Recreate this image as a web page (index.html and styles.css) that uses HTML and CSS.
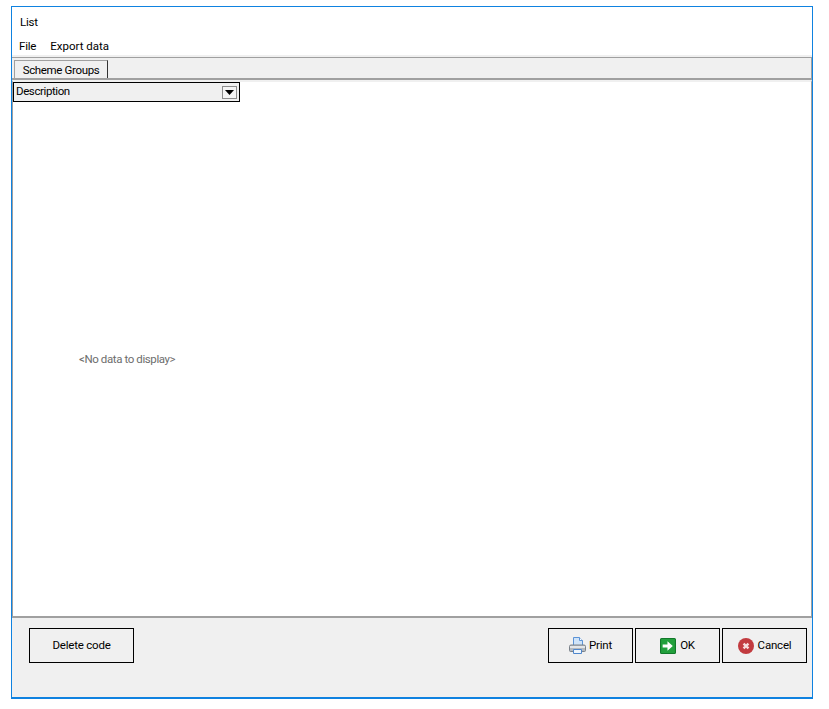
FILE: index.html
```html
<!DOCTYPE html>
<html lang="en">
<head>
<meta charset="utf-8">
<title>List</title>
<link rel="stylesheet" href="styles.css">
</head>
<body>
<div class="window">
  <div class="title">List</div>
  <nav class="menu"><span>File</span><span class="menu-export">Export data</span></nav>
  <div class="tabstrip"><div class="tab">Scheme Groups</div></div>
  <main class="pane">
    <div class="filter">
      <span class="tight">Description</span>
      <span class="drop"><svg width="9" height="5" viewBox="0 0 9 5"><path d="M0 0h9L4.500 5z" fill="#000"/></svg></span>
    </div>
    <div class="empty">&lt;No data to display&gt;</div>
  </main>
  <footer class="footer">
    <button class="btn wide"><span class="label">Delete code</span></button>
    <div class="actions">
      <button class="btn">
        <svg class="ico-print" width="17" height="17" viewBox="0 0 17 17">
          <path d="M4.500 .5h6l3 3v6h-9z" fill="#cfe3f8" stroke="#5b93d6"/>
          <path d="M10.500 .5v3h3" fill="#fff" stroke="#5b93d6"/>
          <path d="M2 8h13a1.500 1.500 0 0 1 1.500 1.500v4a1 1 0 0 1-1 1h-14a1 1 0 0 1-1-1v-4A1.500 1.500 0 0 1 2 8z" fill="#b4b9bf" stroke="#7b828a"/>
          <rect x="1" y="9" width="15" height="2" fill="#e3e6e9"/>
          <path d="M4.500 12.500h8v4h-8z" fill="#eef5fc" stroke="#4f87cc"/>
        </svg>
        <span class="label">Print</span>
      </button>
      <button class="btn">
        <svg width="16" height="16" viewBox="0 0 15 15">
          <rect x=".5" y=".5" width="14" height="14" rx="1" fill="#22a03c" stroke="#12782a"/>
          <path d="M2.500 6h4.500V3l5 4.500-5 4.500V9H2.500z" fill="#fff"/>
        </svg>
        <span class="label">OK</span>
      </button>
      <button class="btn">
        <svg width="16" height="16" viewBox="0 0 15 15">
          <circle cx="7.500" cy="7.500" r="7.500" fill="#c23b3f"/>
          <path d="M5.200 5.200l4.600 4.600M9.800 5.200l-4.600 4.600" stroke="#f6dcdc" stroke-width="2.200" fill="none"/>
        </svg>
        <span class="label">Cancel</span>
      </button>
    </div>
  </footer>
</div>
</body>
</html>
```
FILE: styles.css
```css
* { box-sizing: border-box; }
html, body { height: 100%; }
body {
  margin: 0;
  padding: 6px 0 0 11px;
  background: #fff;
  font: 11.500px Roboto, "Liberation Sans", Arial, sans-serif;
  letter-spacing: -0.2px;
  color: #000;
}
.window {
  width: 802px;
  height: 693px;
  border: 1px solid #0f82e0;
  border-bottom-width: 2px;
  background: #fff;
  display: flex;
  flex-direction: column;
}
.title { height: 28px; padding: 8px 0 0 8px; line-height: 15px; }
.menu { height: 20px; display: flex; gap: 14px; padding: 4px 0 0 7px; line-height: 15px; }
.menu-export { letter-spacing: 0; }
.tabstrip {
  height: 25px;
  background: #f0f0f0;
  border-top: 2px solid #f0f0f0;
  display: flex;
  align-items: flex-end;
  padding-left: 2px;
  box-shadow: inset 0 1px 0 #a0a0a0, inset -1px 0 0 #a0a0a0;
  border-bottom: 2px solid #a0a0a0;
}
.tab {
  width: 94px;
  height: 18px;
  border: 1px solid #a0a0a0;
  border-right: 1px solid #333;
  border-bottom: 0;
  background: #f0f0f0;
  text-align: center;
  line-height: 18px;
  letter-spacing: -0.35px;
}
.pane {
  flex: 1;
  position: relative;
  background: #fff;
  border-top: 2px solid #f0f0f0;
  border-left: 1px solid #a0a0a0;
  border-right: 1px solid #a0a0a0;
  border-bottom: 2px solid #a0a0a0;
}
.filter {
  width: 227px;
  height: 20px;
  border: 1px solid #000;
  background: #f0f0f0;
  display: flex;
  align-items: center;
  justify-content: space-between;
  padding: 0 2px;
}
.tight { letter-spacing: -0.4px; margin-bottom: 2px; }
.drop {
  width: 15px;
  height: 13px;
  background: #f4f4f4;
  border: 1px solid #8c8c8c;
  display: flex;
  align-items: center;
  justify-content: center;
}
.drop svg { display: block; }
.empty { position: absolute; left: 66px; top: 270px; color: #6d6d6d; line-height: 15px; letter-spacing: -0.4px; }
.footer {
  height: 79px;
  background: #f0f0f0;
  display: flex;
  justify-content: space-between;
  align-items: flex-start;
  padding: 10px 5px 0 17px;
}
.actions { display: flex; gap: 2px; }
.btn {
  width: 85px;
  height: 35px;
  background: #f0f0f0;
  border: 1px solid #000;
  font: inherit;
  letter-spacing: inherit;
  color: #000;
  padding: 0;
  display: flex;
  align-items: center;
  justify-content: center;
  gap: 4px;
}
.btn.wide { width: 105px; }
.label { margin-bottom: 2px; }
.ico-print { margin-right: -1px; }
```
